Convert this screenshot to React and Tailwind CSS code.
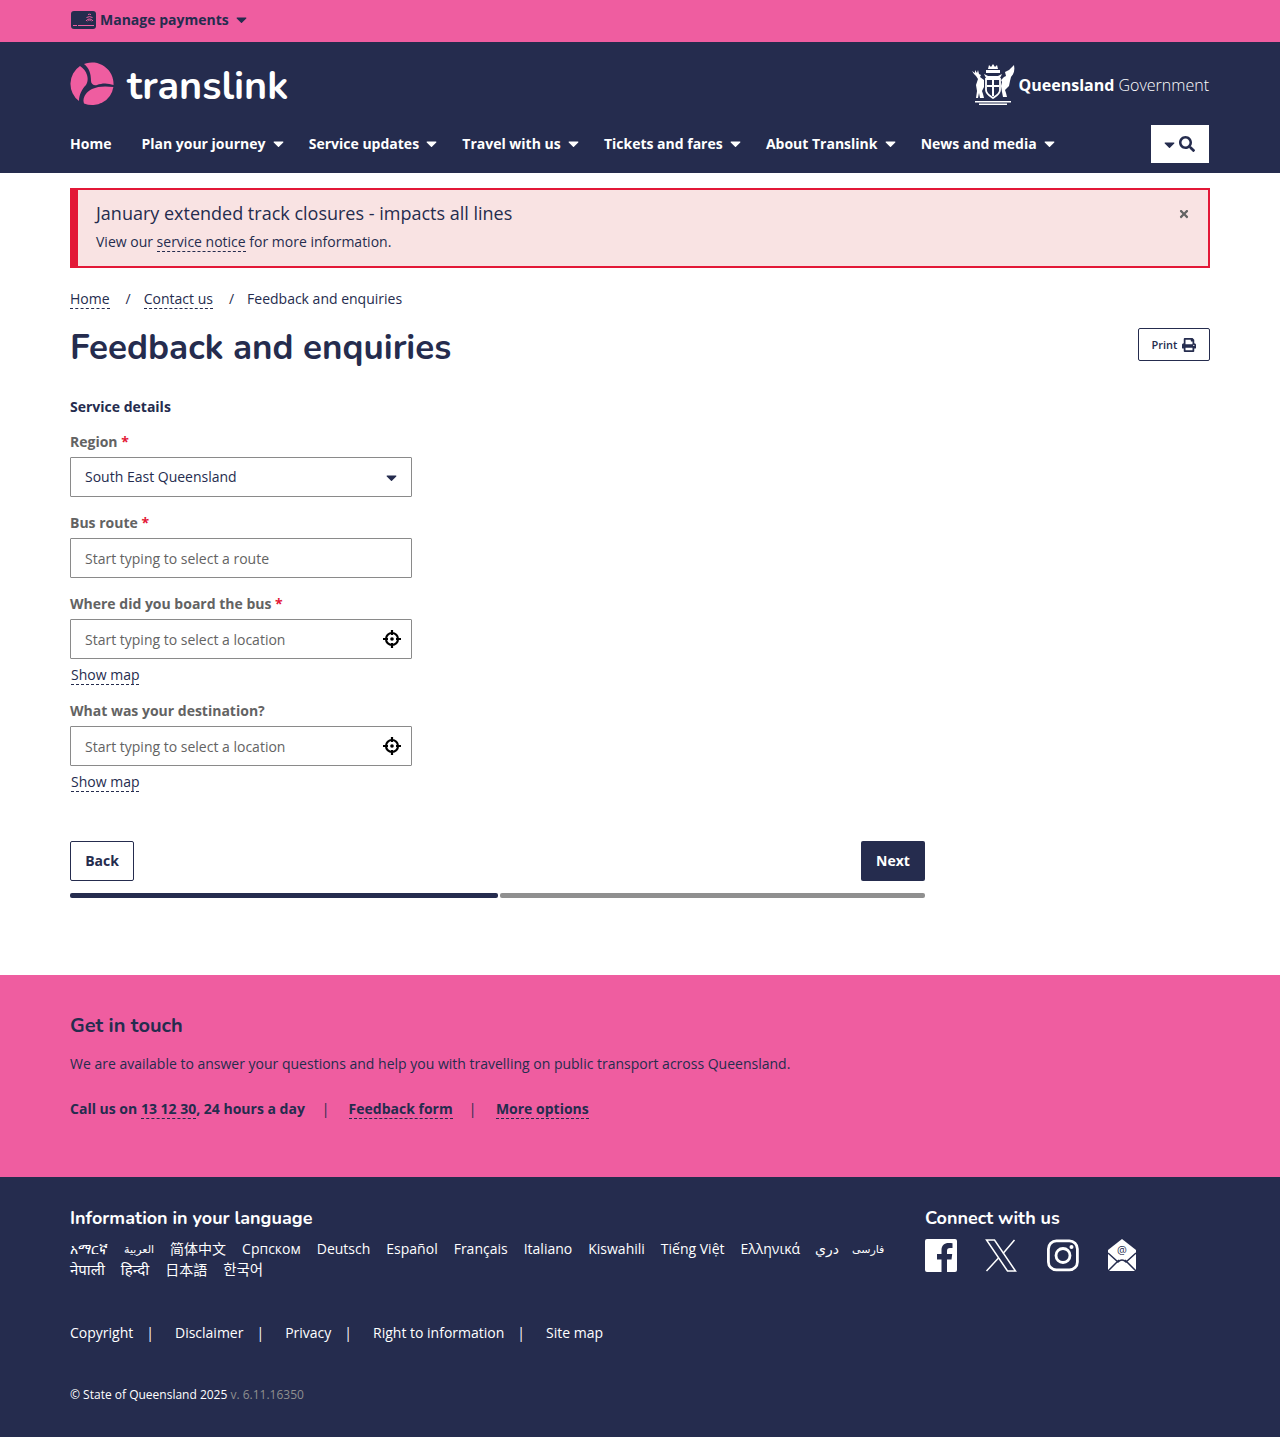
import { FaCaretDown, FaPrint, FaSearch, FaTimes } from "react-icons/fa";

const navItems = ["Plan your journey", "Service updates", "Travel with us", "Tickets and fares", "About Translink", "News and media"];
const languages = [
  ["አማርኛ", "mr-4"], ["العربية", "mr-4 text-[11px]"], ["简体中文", "mr-4"], ["Српском", "mr-4"], ["Deutsch", "mr-4"], ["Español", "mr-4"],
  ["Français", "mr-4"], ["Italiano", "mr-4"], ["Kiswahili", "mr-4"], ["Tiếng Việt", "mr-4"], ["Ελληνικά", "mr-[15px]"], ["دري", "mr-[13px]"], ["فارسی", "text-[11px]"],
  ["नेपाली", "mr-4 text-[15px]"], ["हिन्दी", "mr-4 text-[15px]"], ["日本語", "mr-4"], ["한국어", "text-[14.500px]"],
];
const footerLinks = ["Copyright", "Disclaimer", "Privacy", "Right to information", "Site map"];

const heading = "font-['Nunito','Lato','Open_Sans',sans-serif]";
const dashed = "border-b border-dashed border-[#252c4e]";

function Logo() {
  return (
    <svg width="44" height="44" viewBox="0 0 44 44" className="shrink-0" fill="#ef5da0">
      <path d="M10 4 A21.500 21.500 0 0 0 9 39 C9 33 12 27 16 23 C18 20 18 16 17 13 C16 9 13 6 10 4Z" />
      <path d="M14 2 A21.500 21.500 0 0 1 43.500 23 C38 21 32 21 27 23 C24 24 21 22 21 19 C21 11 19 6 14 2Z" />
      <path d="M43.400 25 A21.500 21.500 0 0 1 14 41.500 C12 36 16 30 22 27 C28 24 36 24 43.400 25Z" />
    </svg>
  );
}

function Crest() {
  return (
    <svg width="44" height="42" viewBox="0 0 44 42" className="shrink-0" fill="white">
      <path d="M18 2l2 2 2-3 2 3 2-2 1 4h-10z" />
      <path d="M15 7h14v3H15zM13 11l4 2h10l4-2-2 4H15z" />
      <path d="M15 16h14v11c0 4-4 6-7 8-3-2-7-4-7-8z" fill="none" stroke="white" strokeWidth="1.800" />
      <path d="M21 17h2v16h-2zM16 22h12v2H16z" />
      <path d="M1 8l3 2V7l2 3 1-3 1 4 2 1-1 2 4 3v7l-2 4 1 3 1 4H9l-1-5-1 5H5l1-7-1-6 2-6-2-3-2-2z" />
      <path d="M43 2c1 5 0 9-3 12l-1 4-1 5-4 4 1 3 1 4h-4l-1-5-1-6 1-4-1-2 3-3 2-1-1-4 4-2z" />
      <path d="M4 38h36v1.500H4zM8 40.500h28V42H8z" />
    </svg>
  );
}

function CardIcon() {
  return (
    <svg width="25" height="18" viewBox="0 0 25 18" className="shrink-0">
      <rect width="25" height="18" rx="3" fill="#252c4e" />
      <path d="M2 14.500h4M7 14.500h16" stroke="#ef5da0" strokeWidth="1.200" />
      <path d="M15 10a4 4 0 0 1 7 0M16.500 10a2.500 2.500 0 0 1 4 0M15.500 6.500a6 6 0 0 1 6 0M17 3.500a4 4 0 0 1 3 0" stroke="#ef5da0" strokeWidth="1" fill="none" />
    </svg>
  );
}

function Crosshair() {
  return (
    <svg width="18" height="18" viewBox="0 0 18 18" className="shrink-0" fill="none" stroke="black">
      <circle cx="9" cy="9" r="6" strokeWidth="2.200" />
      <path d="M9 0v5M9 13v5M0 9h5M13 9h5" strokeWidth="2.200" />
      <circle cx="9" cy="9" r="1.800" fill="black" stroke="none" />
    </svg>
  );
}

function Facebook() {
  return (
    <svg width="32" height="33" viewBox="0 0 32 33" className="shrink-0">
      <path d="M2 0H30a2 2 0 0 1 2 2V31a2 2 0 0 1-2 2H22V20.500H26.500L27.200 15H22V12c0-1.800.8-3 3-3H27.500V4.200C26.500 4 25 4 23.500 4 19.500 4 16.500 6.500 16.500 11v4H12V20.500H16.500V33H2a2 2 0 0 1-2-2V2a2 2 0 0 1 2-2Z" fill="white" />
    </svg>
  );
}

function XLogo() {
  return (
    <svg width="32" height="33" viewBox="0 0 32 33" className="shrink-0" fill="none" stroke="white" strokeWidth="1.500">
      <path d="M1.500 1H9.500L30.500 32H22.500Z" />
      <path d="M29.500 1L18 14.500M13.500 19L1.500 32" />
    </svg>
  );
}

function Instagram() {
  return (
    <svg width="32" height="33" viewBox="0 0 32 33" className="shrink-0" fill="none" stroke="white" strokeWidth="2.800">
      <rect x="1.400" y="1.900" width="29" height="29" rx="8" />
      <circle cx="16" cy="16.500" r="7" />
      <circle cx="24.500" cy="8" r="2" fill="white" stroke="none" />
    </svg>
  );
}

function MailIcon() {
  return (
    <svg width="30" height="33" viewBox="0 0 30 33" className="shrink-0">
      <path d="M15 0 L29 11 V32 H1 V11Z" fill="white" />
      <path d="M1 32 L12 21 M29 32 L18 21 M1 14 L11 23 Q15 19 19 23 L29 14" stroke="#252c4e" strokeWidth="1.500" fill="none" />
      <text x="15" y="15" textAnchor="middle" fontSize="11" fill="#252c4e" fontFamily="Open Sans">@</text>
    </svg>
  );
}

function Label({ children, required }) {
  return (
    <div className="text-[14px] leading-[19px] font-bold text-[#636363]">
      {children}
      {required && <span className="text-[#e31837]"> *</span>}
    </div>
  );
}

function Field({ placeholder, icon, children }) {
  return (
    <div className="mt-[6px] flex h-10 w-[342px] items-center justify-between rounded-[1px] border border-[#8a8a8a] bg-white pl-[14px] pr-[10px] text-[14px]">
      <span className={children ? "pb-[2px] text-[#252c4e]" : "text-[#636363]"}>{children || placeholder}</span>
      {icon}
    </div>
  );
}

function ShowMap() {
  return (
    <div className="mt-[7px] flex">
      <a className={`ml-px text-[14px] leading-[18px] text-[#252c4e] ${dashed}`}>Show map</a>
    </div>
  );
}

export default function App() {
  return (
    <div className="min-h-[1437px] bg-white font-['Open_Sans',sans-serif] text-[#252c4e]">
      <div className="flex h-[42px] items-center bg-[#ef5da0] pb-[3px] pl-[71px]">
        <CardIcon />
        <span className="ml-[4px] text-[14px] font-bold">Manage payments</span>
        <FaCaretDown className="ml-[4px] text-[17px]" />
      </div>

      <header className="h-[131px] bg-[#252c4e] px-[70px] text-white">
        <div className="flex h-[83px] items-center justify-between">
          <div className="flex items-center gap-[13px]">
            <Logo />
            <span className={`${heading} pt-[7px] text-[39.500px] leading-none font-bold`}>translink</span>
          </div>
          <div className="mr-px flex items-center pt-px">
            <Crest />
            <span className="ml-[4px] pt-[2px] text-[16px]">
              <span className="font-bold">Queensland</span> <span className="font-light">Government</span>
            </span>
          </div>
        </div>
        <nav className="flex h-[38px] items-center pb-[2px] text-[14px] font-bold">
          <a className="mr-[30px]">Home</a>
          {navItems.map((item) => (
            <a key={item} className="mr-[22.200px] flex items-center gap-[4px]">
              {item}
              <FaCaretDown className="text-[17px]" />
            </a>
          ))}
          <button className="mr-px -mb-[2px] ml-auto flex h-[38px] w-[58px] items-center justify-center gap-[1px] bg-white pr-[4px] text-[#252c4e]">
            <FaCaretDown className="text-[17px]" />
            <FaSearch className="text-[16px]" />
          </button>
        </nav>
      </header>

      <main className="px-[70px]">
        <div className="relative mt-[15px] h-[80px] border-2 border-l-[8px] border-[#e31837] bg-[#f9e3e3] pl-[18px] pt-[10px]">
          <div className="text-[18px] leading-[26px]">January extended track closures - impacts all lines</div>
          <div className="mt-[6px] text-[14px] leading-[20px]">
            View our <a className={dashed}>service notice</a> for more information.
          </div>
          <FaTimes className="absolute right-[18px] top-[18px] text-[12px] text-[#636363]" />
        </div>

        <div className="mt-[22px] flex text-[14px] leading-[18px]">
          <a className={dashed}>Home</a>
          <span className="ml-[16px] mr-[13px]">/</span>
          <a className={dashed}>Contact us</a>
          <span className="ml-[16px] mr-[13px]">/</span>
          <span>Feedback and enquiries</span>
        </div>

        <div className="mt-[15px] flex items-start justify-between">
          <h1 className={`${heading} text-[35px] leading-[48px] font-bold`}>Feedback and enquiries</h1>
          <button className="mt-[4px] flex h-[33px] w-[72px] items-center justify-center gap-[5px] rounded-[2px] border border-[#252c4e] pt-px text-[11px] font-semibold">
            Print <FaPrint className="text-[14px]" />
          </button>
        </div>

        <div className="mt-[25px] text-[14px] leading-[19px] font-bold">Service details</div>

        <div className="mt-[16px]">
          <Label required>Region</Label>
          <Field icon={<FaCaretDown className="mr-px text-[17px]" />}>South East Queensland</Field>
        </div>
        <div className="mt-[16px]">
          <Label required>Bus route</Label>
          <Field placeholder="Start typing to select a route" />
        </div>
        <div className="mt-[16px]">
          <Label required>Where did you board the bus</Label>
          <Field placeholder="Start typing to select a location" icon={<Crosshair />} />
          <ShowMap />
        </div>
        <div className="mt-[16px]">
          <Label>What was your destination?</Label>
          <Field placeholder="Start typing to select a location" icon={<Crosshair />} />
          <ShowMap />
        </div>

        <div className="mt-[49px] flex w-[855px] justify-between">
          <button className="h-10 w-[64px] rounded-[2px] border border-[#252c4e] pb-px text-[14px] font-bold">Back</button>
          <button className="h-10 w-[64px] rounded-[2px] bg-[#252c4e] pb-px text-[14px] font-bold text-white">Next</button>
        </div>
        <div className="mt-[12px] flex w-[855px] gap-[2px]">
          <div className="h-[5px] w-[428px] rounded-[2px] bg-[#252c4e]" />
          <div className="h-[5px] flex-1 rounded-[2px] bg-[#8f8f8f]" />
        </div>
      </main>

      <section className="mt-[77px] h-[202px] bg-[#ef5da0] px-[70px] pt-[37px]">
        <h2 className={`${heading} text-[20px] leading-[28px] font-bold`}>Get in touch</h2>
        <p className="mt-[14px] text-[14px] leading-[20px]">
          We are available to answer your questions and help you with travelling on public transport across Queensland.
        </p>
        <div className="mt-[26px] flex text-[14px] leading-[18px] font-bold">
          <span>
            Call us on <a className={dashed}>13 12 30</a>, 24 hours a day
          </span>
          <span className="ml-[17px] mr-[19px] font-normal">|</span>
          <a className={dashed}>Feedback form</a>
          <span className="ml-[16px] mr-[19.500px] font-normal">|</span>
          <a className={dashed}>More options</a>
        </div>
      </section>

      <footer className="h-[260px] bg-[#252c4e] px-[70px] pt-[29px] text-white">
        <div className="flex">
          <div className="w-[855px]">
            <h2 className={`${heading} text-[18px] leading-[24px] font-bold`}>Information in your language</h2>
            <div className="mt-[8px] flex w-[830px] flex-wrap items-center text-[14px] leading-[21px] font-['Open_Sans','Noto_Sans','Noto_Sans_CJK_SC','DejaVu_Sans',sans-serif]">
              {languages.map(([name, gap]) => (
                <a key={name} className={gap}>{name}</a>
              ))}
            </div>
          </div>
          <div>
            <h2 className={`${heading} text-[18px] leading-[24px] font-bold`}>Connect with us</h2>
            <div className="mt-[9px] flex items-center">
              <Facebook />
              <span className="ml-[28px]"><XLogo /></span>
              <span className="ml-[30px]"><Instagram /></span>
              <span className="ml-[28px]"><MailIcon /></span>
            </div>
          </div>
        </div>

        <div className="mt-[43px] flex text-[14px] leading-[20px]">
          {footerLinks.map((link, i) => (
            <span key={link} className="flex">
              <a>{link}</a>
              {i < footerLinks.length - 1 && <span className="ml-[13px] mr-[21px]">|</span>}
            </span>
          ))}
        </div>

        <div className="mt-[43px] text-[12px] leading-[18px]">
          © State of Queensland 2025 <span className="text-[#8f8f8f]">v. 6.11.16350</span>
        </div>
      </footer>
    </div>
  );
}
